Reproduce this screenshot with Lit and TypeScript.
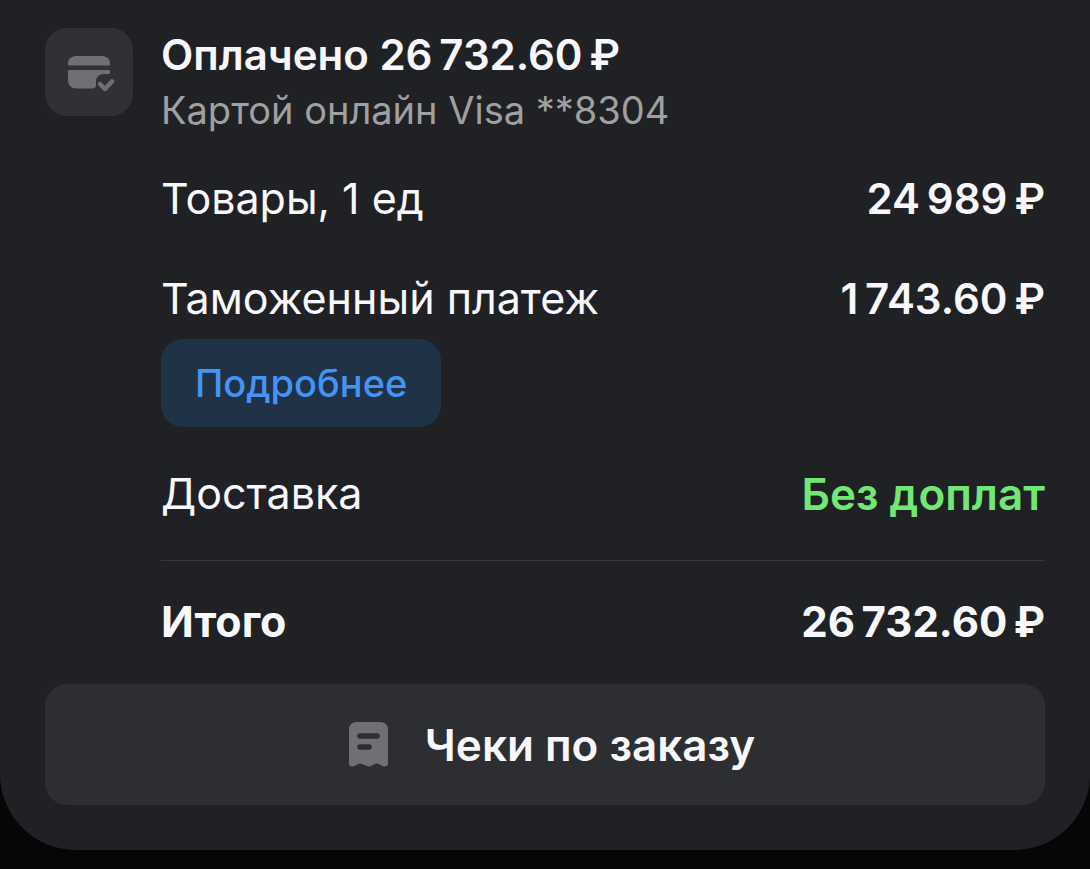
import { LitElement, html, css } from "lit";
import { customElement } from "lit/decorators.js";

@customElement("app-root")
export class AppRoot extends LitElement {
  static styles = css`
    :host {
      display: block;
      min-height: 100vh;
      background: #060606;
      color: #f7f7fc;
      font-family: Inter, "Noto Sans", sans-serif;
      font-size: 42px;
      line-height: 56px;
    }
    * {
      box-sizing: border-box;
    }
    .card {
      padding: 28px 45px 45px;
      background: #202124;
      border-radius: 0 0 76px 76px;
    }
    .payment {
      display: grid;
      grid-template-columns: 88px 1fr;
      column-gap: 28px;
    }
    .tile {
      width: 88px;
      height: 88px;
      border-radius: 22px;
      background: #303135;
    }
    .tile svg,
    .receipts svg {
      display: block;
    }
    h1 {
      margin: 0;
      font-size: 42px;
      line-height: 54px;
      font-weight: 600;
    }
    .method {
      margin: 0;
      font-size: 38px;
      color: #a0a0a2;
    }
    dl,
    dt,
    dd {
      margin: 0;
    }
    .rows {
      padding-top: 33px;
    }
    .row {
      display: flex;
      justify-content: space-between;
      margin-bottom: 44px;
    }
    .row.fee {
      margin-bottom: 12px;
    }
    .row.delivery {
      margin-bottom: 38px;
    }
    dt {
      font-size: 43px;
      line-height: 54px;
    }
    dd {
      font-weight: 600;
    }
    .free {
      color: #71e774;
      font-size: 44px;
    }
    .row.total {
      margin-bottom: 0;
      padding-top: 33px;
      border-top: 1px solid #38393c;
    }
    .total dt,
    .total dd {
      font-weight: 700;
    }
    button {
      border: 0;
      border-radius: 22px;
      font: inherit;
      cursor: pointer;
    }
    .more {
      display: block;
      height: 88px;
      margin-bottom: 39px;
      padding: 0 34px;
      background: #203245;
      color: #4394f6;
      font-size: 38px;
      font-weight: 500;
    }
    .receipts {
      display: flex;
      align-items: center;
      justify-content: center;
      gap: 36px;
      width: 100%;
      height: 121px;
      margin-top: 34px;
      padding: 0 6px 0 20px;
      background: #2d2e31;
      color: #f7f7fc;
      font-size: 44px;
      font-weight: 600;
    }
  `;

  render() {
    return html`
      <main class="card">
        <section class="payment">
          <div class="tile">
            <svg width="88" height="88" viewBox="0 0 88 88" fill="#6f7073" aria-hidden="true">
              <path d="M23 36.500V35C23 30.500 27 28 32 28H56C61 28 65 30.500 65 35V36.500Q65 37.500 64 37.500H24Q23 37.500 23 36.500Z" />
              <path d="M24 42H64Q65 42 65 43V45Q65 46 64 46H59Q51 46 51 54V57Q51 60.500 47 60.500H32C26 60.500 23 57.500 23 52V43Q23 42 24 42Z" />
              <path d="M55 56L60 61L67 53.500" fill="none" stroke="#6f7073" stroke-width="4.500" stroke-linecap="round" stroke-linejoin="round" />
            </svg>
          </div>
          <div>
            <h1>Оплачено 26&#8201;732.60&#8201;₽</h1>
            <p class="method">Картой онлайн Visa **8304</p>
            <dl class="rows">
              <div class="row">
                <dt>Товары, 1 ед</dt>
                <dd>24&#8201;989&#8201;₽</dd>
              </div>
              <div class="row fee">
                <dt>Таможенный платеж</dt>
                <dd>1&#8201;743.60&#8201;₽</dd>
              </div>
            </dl>
            <button class="more" type="button">Подробнее</button>
            <dl>
              <div class="row delivery">
                <dt>Доставка</dt>
                <dd class="free">Без доплат</dd>
              </div>
              <div class="row total">
                <dt>Итого</dt>
                <dd>26&#8201;732.60&#8201;₽</dd>
              </div>
            </dl>
          </div>
        </section>
        <button class="receipts" type="button">
          <svg width="40" height="46" viewBox="0 0 40 46" aria-hidden="true">
            <path fill="#6f7073" d="M0 8Q0 0 8 0H31Q39 0 39 8V41Q39 45 35 44.500C32 44 30 41.500 28 41.500C25 41.500 23 44.500 20 44.500C17 44.500 14 41.500 11 41.500C9 41.500 7 44 4 44.500Q0 45 0 41Z" />
            <path d="M11 14H28M11 25H20" fill="none" stroke="#2d2e31" stroke-width="5.500" stroke-linecap="round" />
          </svg>
          <span>Чеки по заказу</span>
        </button>
      </main>
    `;
  }
}
